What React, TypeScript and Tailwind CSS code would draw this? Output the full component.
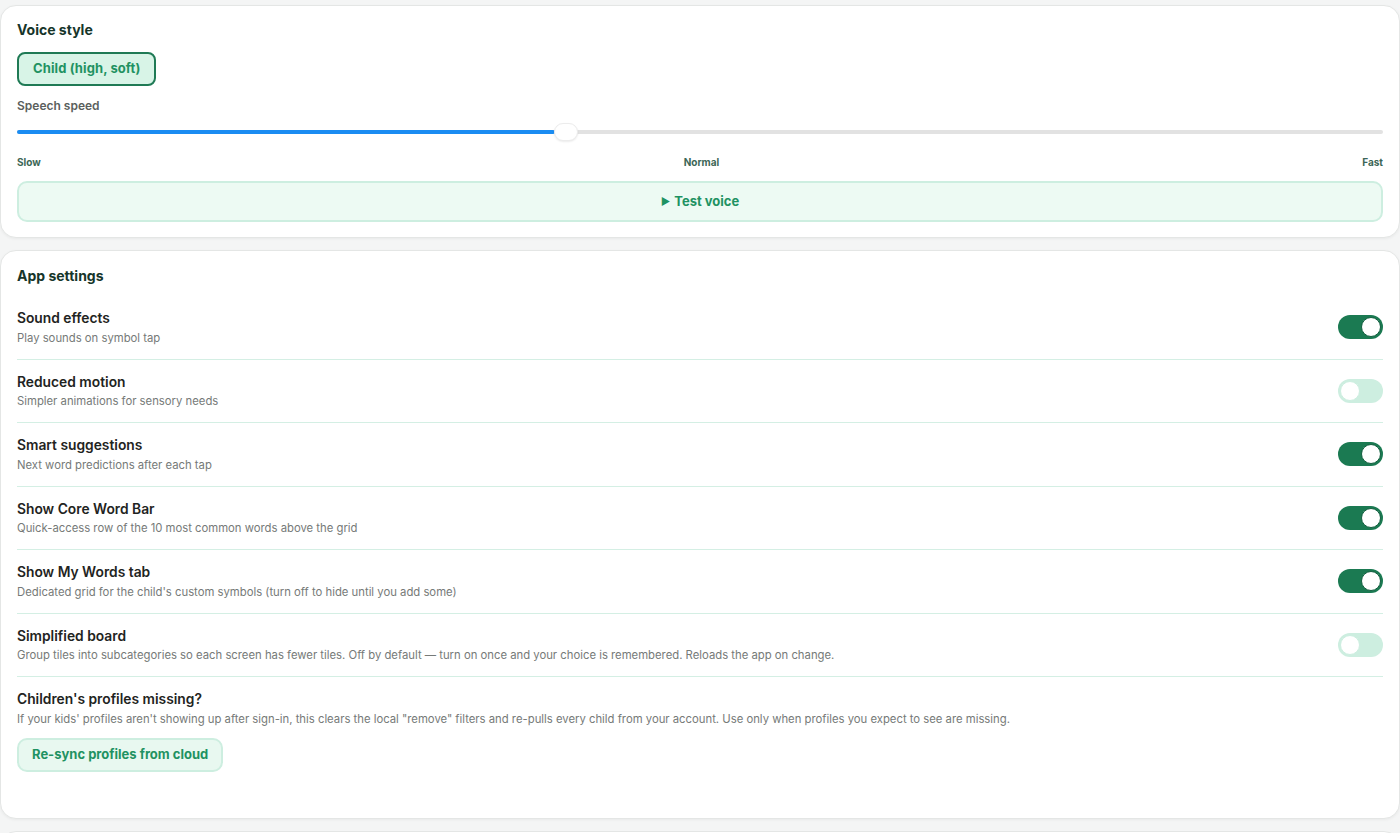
import React from "react";

const font = { fontFamily: "Inter, 'Noto Sans', 'Liberation Sans', sans-serif" };

function Toggle({ on }: { on: boolean }) {
  return on ? (
    <div className="w-[45px] h-[24px] rounded-full bg-[#1b7a52] flex items-center justify-end pr-[2px] shrink-0">
      <div className="w-[20px] h-[20px] rounded-full bg-white border-[1.5px] border-[#135f3f]" />
    </div>
  ) : (
    <div className="w-[45px] h-[24px] rounded-full bg-[#cdeee0] flex items-center justify-start pl-[2px] shrink-0">
      <div className="w-[20px] h-[20px] rounded-full bg-white border-[1.5px] border-[#cdeee0]" />
    </div>
  );
}

const rows = [
  { t: "Sound effects", d: "Play sounds on symbol tap", on: true },
  { t: "Reduced motion", d: "Simpler animations for sensory needs", on: false },
  { t: "Smart suggestions", d: "Next word predictions after each tap", on: true },
  { t: "Show Core Word Bar", d: "Quick-access row of the 10 most common words above the grid", on: true },
  { t: "Show My Words tab", d: "Dedicated grid for the child's custom symbols (turn off to hide until you add some)", on: true },
  {
    t: "Simplified board",
    d: "Group tiles into subcategories so each screen has fewer tiles. Off by default — turn on once and your choice is remembered. Reloads the app on change.",
    on: false,
  },
];

export default function App() {
  return (
    <div className="w-[1400px] h-[833px] overflow-hidden bg-[#f4f5f5] pt-[5px] flex flex-col gap-[12px]" style={font}>
      {/* Voice card */}
      <div className="w-[1400px] bg-white rounded-[16px] border border-[#e4e6e5] shadow-[0_1px_3px_rgba(0,0,0,0.05)] px-[16px] pt-[15px] pb-[15px] shrink-0">
        <div className="text-[14px] leading-[18px] font-bold text-[#16352a]">Voice style</div>
        <div className="mt-[13px]">
          <button className="h-[34px] px-[14px] rounded-[8px] border-2 border-[#1f7a55] bg-[#d8f4e7] text-[13px] font-bold text-[#1f9262] tracking-[0.1px]">
            Child (high, soft)
          </button>
        </div>
        <div className="mt-[12px] text-[12px] leading-[16px] font-semibold text-[#5b5f5d]">Speech speed</div>
        <div className="relative mt-[8px] h-[20px] flex items-center">
          <div className="w-full h-[4px] rounded-full bg-[#e2e2e2] flex">
            <div className="w-[538px] h-[4px] rounded-full bg-[#1a8cf2]" />
          </div>
          <div className="absolute left-[537px] top-[1px] w-[24px] h-[18px] rounded-[9px] bg-white border border-[#ececec] shadow-[0_1px_2px_rgba(0,0,0,0.08)]" />
        </div>
        <div className="mt-[13px] flex justify-between text-[10px] leading-[14px] font-bold text-[#3c6656]">
          <span>Slow</span>
          <span>Normal</span>
          <span>Fast</span>
        </div>
        <button className="mt-[12px] w-full h-[41px] rounded-[10px] border-2 border-[#cdeee0] bg-[#edfaf3] text-[13px] font-bold text-[#1f9262] flex items-center justify-center gap-[4px]">
          <span className="text-[10px]">▶</span>
          <span>Test voice</span>
        </button>
      </div>

      {/* App settings card */}
      <div className="w-[1400px] bg-white rounded-[16px] border border-[#e4e6e5] shadow-[0_1px_3px_rgba(0,0,0,0.05)] px-[16px] pt-[16px] pb-[46px] shrink-0">
        <div className="text-[14px] leading-[18px] font-bold text-[#16352a]">App settings</div>
        <div className="mt-[11px] flex flex-col">
          {rows.map((r) => (
            <div key={r.t} className="flex items-center justify-between py-[13px] border-b border-[#d4efe4]">
              <div className="flex flex-col gap-[2.5px]">
                <div className="text-[13.8px] leading-[18px] font-semibold text-[#1f2422]">{r.t}</div>
                <div className="text-[11.3px] leading-[16px] text-[#767a78]">{r.d}</div>
              </div>
              <Toggle on={r.on} />
            </div>
          ))}
          <div className="pt-[13px] flex flex-col gap-[2.5px]">
            <div className="text-[13.8px] leading-[18px] font-semibold text-[#1f2422]">Children's profiles missing?</div>
            <div className="text-[11.3px] leading-[16px] text-[#767a78]">
              If your kids' profiles aren't showing up after sign-in, this clears the local "remove" filters and re-pulls every child from your account. Use only when profiles you expect to see are missing.
            </div>
          </div>
          <div className="mt-[11px]">
            <button className="h-[34px] px-[13px] rounded-[10px] border-2 border-[#cdeee0] bg-[#e8f8f0] text-[13px] font-bold text-[#1f9262]">
              Re-sync profiles from cloud
            </button>
          </div>
        </div>
      </div>

      <div className="w-[1400px] h-[40px] bg-white rounded-[16px] border border-[#e4e6e5] shrink-0" />
    </div>
  );
}
